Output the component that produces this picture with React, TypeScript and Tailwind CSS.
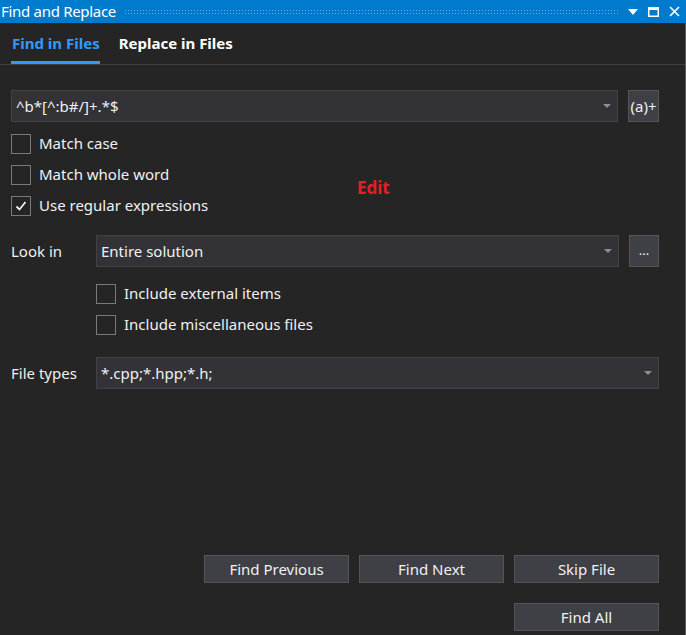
import React from 'react';

const font = { fontFamily: '"Noto Sans", "Open Sans", sans-serif' };

function Checkbox({ label, checked = false }: { label: string; checked?: boolean }) {
  return (
    <div className="flex h-[31px] items-center gap-[8px]">
      <div className="flex h-[20px] w-[20px] items-center justify-center border border-[#7a7a7a] bg-[#252526]">
        {checked && (
          <svg width="14" height="14" viewBox="0 0 14 14">
            <path d="M2.5 7.5 L5.5 10.5 L11.5 3" fill="none" stroke="#f1f1f1" strokeWidth="1.8" />
          </svg>
        )}
      </div>
      <span className="text-[15px] text-[#f1f1f1]">{label}</span>
    </div>
  );
}

function Combo({ value, className }: { value: string; className: string }) {
  return (
    <div className={`flex h-[32px] items-center border border-[#434346] bg-[#333337] pl-[4px] pr-[6px] ${className}`}>
      <span className="flex-1 text-[15px] text-[#f1f1f1]">{value}</span>
      <svg width="8" height="5" viewBox="0 0 8 5">
        <path d="M0 0 H8 L4 4 Z" fill="#8e8e92" />
      </svg>
    </div>
  );
}

function Button({ label }: { label: string }) {
  return (
    <div className="flex h-[28px] w-[145px] items-center justify-center border border-[#555558] bg-[#3f3f46] text-[15px] text-[#f1f1f1]">
      {label}
    </div>
  );
}

export default function App() {
  return (
    <div className="flex h-[635px] w-[686px] flex-col bg-[#252526]" style={font}>
      {/* title bar */}
      <div className="flex h-[23px] items-center bg-[#007acc] pr-[6px]">
        <span className="pl-[1px] text-[15px] leading-none tracking-[-0.3px] text-white">Find and Replace</span>
        <div
          className="mx-[8px] h-[5px] flex-1"
          style={{
            backgroundImage: 'radial-gradient(circle, rgba(120,180,230,0.8) 0.7px, transparent 0.8px)',
            backgroundSize: '3px 3px',
          }}
        />
        <div className="flex items-center gap-[10px]">
          <svg width="10" height="6" viewBox="0 0 10 6">
            <path d="M0 0 H10 L5 6 Z" fill="#fff" />
          </svg>
          <svg width="11" height="10" viewBox="0 0 11 10">
            <rect x="0.75" y="0.75" width="9.5" height="8.5" fill="none" stroke="#fff" strokeWidth="1.5" />
            <rect x="0" y="0" width="11" height="3" fill="#fff" />
          </svg>
          <svg width="11" height="11" viewBox="0 0 11 11">
            <path d="M1 1 L10 10 M10 1 L1 10" stroke="#fff" strokeWidth="1.6" />
          </svg>
        </div>
      </div>

      <div className="flex flex-1 flex-col border-r border-[#5a5a5e]">
        {/* tabs */}
        <div className="flex h-[42px] items-end border-b border-[#3f3f46] pl-[11px]">
          <div className="flex flex-col">
            <span className="px-[1px] pb-[7px] text-[15px] font-bold text-[#3399ff]">Find in Files</span>
            <div className="h-[3px] w-[89px] bg-[#3399ff]" />
          </div>
          <span className="ml-[18px] pb-[10px] text-[15px] font-bold text-white">Replace in Files</span>
        </div>

        {/* search */}
        <div className="mt-[25px] flex pl-[11px]">
          <Combo value="^b*[^:b#/]+.*$" className="w-[607px]" />
          <div className="ml-[10px] flex h-[32px] w-[31px] items-center justify-center border border-[#555558] bg-[#3f3f46] text-[15px] text-[#f1f1f1]">
            (a)+
          </div>
        </div>

        <div className="relative mt-[6px] flex flex-col pl-[11px]">
          <Checkbox label="Match case" />
          <Checkbox label="Match whole word" />
          <Checkbox label="Use regular expressions" checked />
          <span className="absolute left-[357px] top-[47px] text-[17px] font-bold text-[#e51e25]">Edit</span>
        </div>

        {/* look in */}
        <div className="mt-[14px] flex items-center pl-[11px]">
          <span className="w-[85px] text-[15px] text-[#f1f1f1]">Look in</span>
          <Combo value="Entire solution" className="w-[523px]" />
          <div className="ml-[10px] flex h-[32px] w-[30px] items-center justify-center border border-[#555558] bg-[#3f3f46] text-[13px] text-[#f1f1f1]">
            ...
          </div>
        </div>

        <div className="mt-[11px] flex flex-col pl-[96px]">
          <Checkbox label="Include external items" />
          <Checkbox label="Include miscellaneous files" />
        </div>

        <div className="mt-[17px] flex items-center pl-[11px]">
          <span className="w-[85px] text-[15px] text-[#f1f1f1]">File types</span>
          <Combo value="*.cpp;*.hpp;*.h;" className="w-[563px]" />
        </div>

        {/* buttons */}
        <div className="mt-auto flex flex-col items-end gap-[20px] pb-[4px] pr-[26px]">
          <div className="flex gap-[10px]">
            <Button label="Find Previous" />
            <Button label="Find Next" />
            <Button label="Skip File" />
          </div>
          <Button label="Find All" />
        </div>
      </div>
    </div>
  );
}
